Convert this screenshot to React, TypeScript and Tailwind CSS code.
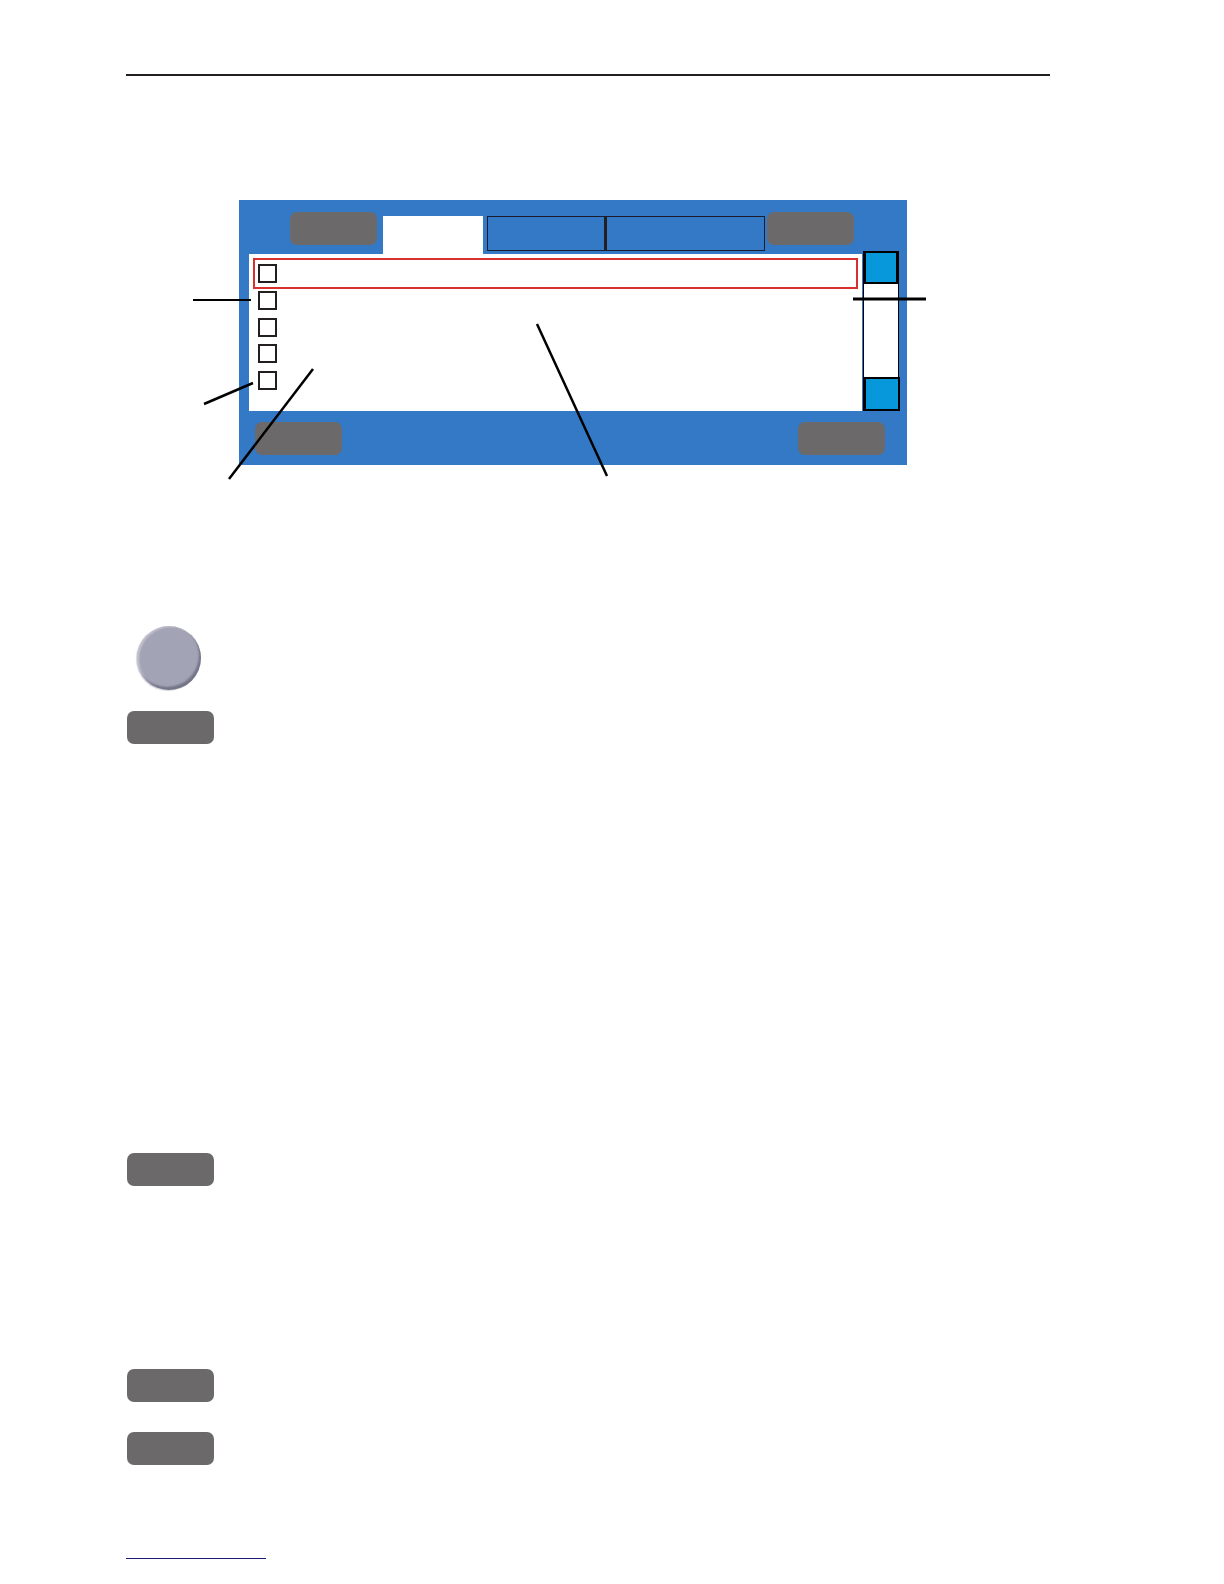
import React from "react";

const GrayBtn = ({ className = "" }: { className?: string }) => (
  <div className={`w-[87px] h-[33px] rounded-[7px] bg-[#6b6969] ${className}`} />
);

const Check = () => <div className="w-[19px] h-[19px] border-2 border-[#231f20] bg-white" />;

export default function App() {
  return (
    <div className="relative w-[1224px] h-[1584px] bg-white overflow-hidden font-['Liberation_Sans',sans-serif]">
      {/* top rule */}
      <div className="mt-[74px] ml-[126px] w-[924px] h-[2px] bg-[#231f20]" />

      {/* screen panel */}
      <div className="mt-[124px] ml-[239px] w-[668px] h-[265px] bg-[#3379c5] flex flex-col">
        {/* tab row */}
        <div className="h-[51px] flex items-start pl-[51px] pt-[12px]">
          <GrayBtn />
          <div className="ml-[6px] mt-[4px] w-[100px] h-[38px] bg-white" />
          <div className="ml-[4px] mt-[4px] w-[278px] h-[35px] border border-[#1c1c2c] flex">
            <div className="w-[119px] h-full border-r-[3px] border-[#231f20]" />
            <div className="flex-1" />
          </div>
          <GrayBtn className="ml-[2px]" />
        </div>
        {/* middle */}
        <div className="h-[160px] flex items-start">
          <div className="ml-[10px] mt-[3px] w-[613px] h-[157px] bg-white pt-[4px] pl-[4px]">
            <div className="w-[605px] h-[31px] border-2 border-[#d8302f] flex items-center pl-[3px]">
              <Check />
            </div>
            <div className="mt-[2px] pl-[5px] flex flex-col gap-[7.5px]">
              <Check />
              <Check />
              <Check />
              <Check />
            </div>
          </div>
          <div className="ml-[1px] w-[36px] h-[160px] border-x border-black bg-white flex flex-col justify-between">
            <div className="h-[33px] bg-[#0798dc] border-2 border-black" />
            <div className="h-[34px] bg-[#0798dc] border-2 border-black -mr-[2px]" />
          </div>
        </div>
        {/* bottom row */}
        <div className="mt-[11px] flex justify-between pl-[16px] pr-[22px]">
          <GrayBtn />
          <GrayBtn />
        </div>
      </div>

      {/* knob */}
      <div className="mt-[161px] ml-[137px] w-[64px] h-[64px] rounded-full bg-[#a3a3b6] shadow-[inset_-2px_-3px_2px_rgba(60,60,80,0.45),inset_2px_1px_2px_rgba(255,255,255,0.35),-1px_1px_1px_rgba(200,200,210,0.8)]" />

      <GrayBtn className="mt-[21px] ml-[127px]" />
      <GrayBtn className="mt-[409px] ml-[127px]" />
      <GrayBtn className="mt-[183px] ml-[127px]" />
      <GrayBtn className="mt-[30px] ml-[127px]" />

      {/* footer rule */}
      <div className="mt-[93px] ml-[126px] w-[140px] h-[1px] bg-[#1a1a6e]" />

      {/* callout lines */}
      <svg className="absolute left-0 top-0 pointer-events-none" width="1224" height="600" viewBox="0 0 1224 600">
        <g stroke="#000" strokeWidth="2" strokeLinecap="butt">
          <line x1="193" y1="300" x2="251" y2="300" />
          <line x1="204" y1="404" x2="253" y2="383" strokeWidth="2.5" />
          <line x1="229" y1="479" x2="313" y2="369" strokeWidth="2.5" />
          <line x1="537" y1="324" x2="607" y2="476" strokeWidth="2.5" />
          <line x1="853" y1="299" x2="926" y2="299" strokeWidth="3" />
        </g>
      </svg>
    </div>
  );
}
